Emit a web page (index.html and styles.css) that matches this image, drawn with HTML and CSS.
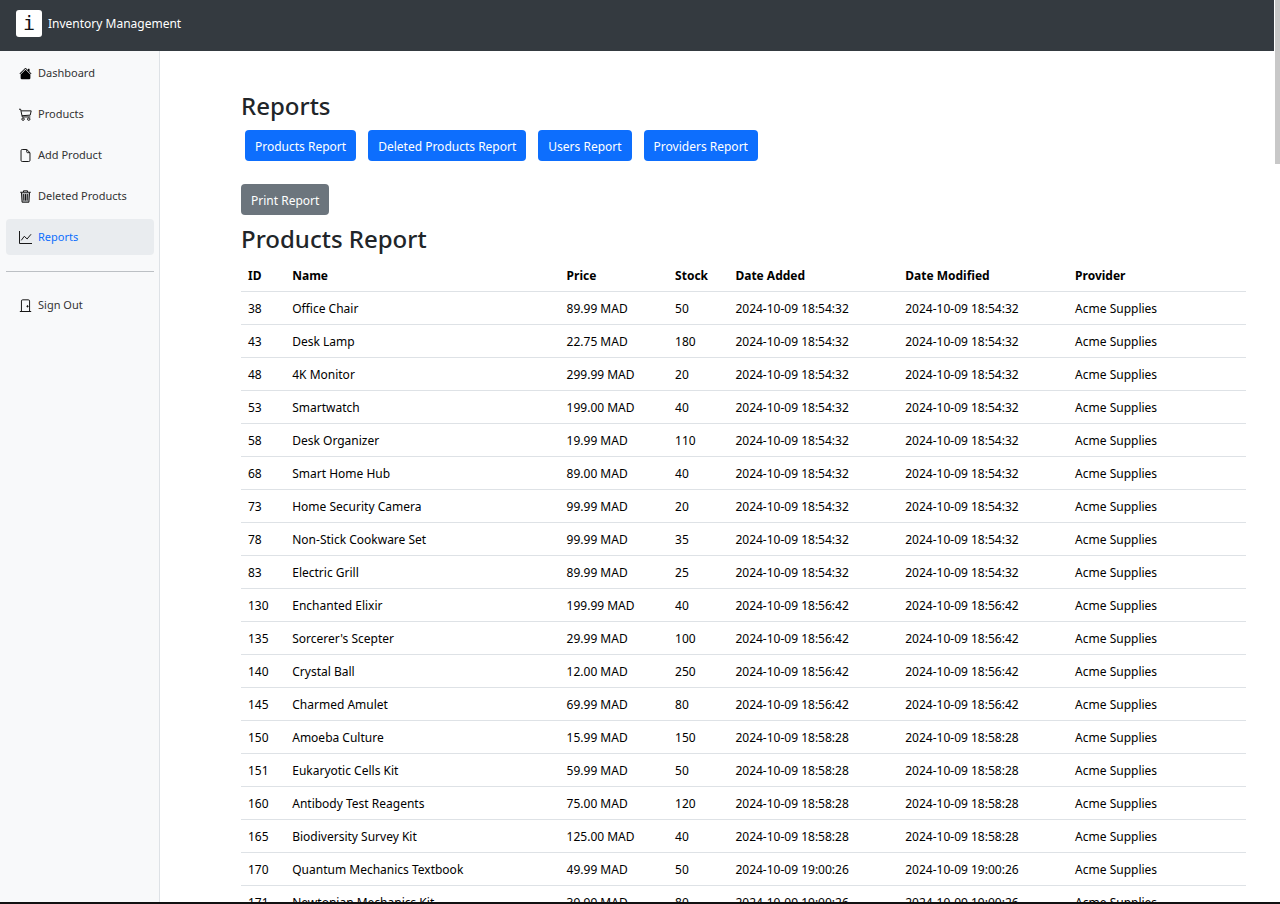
FILE: index.html
```html
<!DOCTYPE html>
<html lang="en">
<head>
<meta charset="utf-8">
<title>Inventory Management</title>
<link rel="stylesheet" href="styles.css">
</head>
<body>
<header class="topbar">
  <a class="brand" href="#"><span class="brand-mark">i</span><span>Inventory Management</span></a>
</header>
<div class="layout">
  <nav class="sidebar">
    <a class="nav-link" href="#">
      <svg class="icon solid" viewBox="0 0 16 16"><path d="M8.7 1.5a1 1 0 0 0-1.4 0L.6 8.1l.8.8L8 2.2l6.600 6.700.8-.8L13 5.800V2.500a.5.5 0 0 0-.5-.5h-1a.5.5 0 0 0-.5.5v1.300z"/><path d="m8 3.300 6 6v4.200a1.500 1.500 0 0 1-1.500 1.500h-9A1.500 1.500 0 0 1 2 13.500V9.300z"/></svg>
      <span>Dashboard</span></a>
    <a class="nav-link" href="#">
      <svg class="icon" viewBox="0 0 16 16"><path d="M0 1.500h2l2 9.500h10M2.600 3.500H15l-1.200 5.300L3.700 9.500"/><circle cx="5" cy="13.700" r="1.500"/><circle cx="12" cy="13.700" r="1.500"/></svg>
      <span>Products</span></a>
    <a class="nav-link" href="#">
      <svg class="icon" viewBox="0 0 16 16"><path d="M9.500.6H4A1.500 1.500 0 0 0 2.500 2v12A1.500 1.500 0 0 0 4 15.400h8a1.500 1.500 0 0 0 1.500-1.400V4.500zv2.900a1 1 0 0 0 1 1h3"/></svg>
      <span>Add Product</span></a>
    <a class="nav-link" href="#">
      <svg class="icon" viewBox="0 0 16 16"><path class="shade" d="M3 3.500l.8 11.500h8.400L13 3.500z"/><path d="M1.500 2.800h13M5.500 2.500V1h5v1.500M3 3l.8 12h8.400L13 3M5.700 5l.3 8M8 5v8M10.300 5l-.3 8"/></svg>
      <span>Deleted Products</span></a>
    <a class="nav-link active" href="#" aria-current="page">
      <svg class="icon" viewBox="0 0 16 16"><path d="M.6 0v15.400H16M2.800 11.500 6.500 6.500l3.500 3.300L14.800 4"/></svg>
      <span>Reports</span></a>
    <hr class="divider">
    <a class="nav-link" href="#">
      <svg class="icon" viewBox="0 0 16 16"><path d="M1 15.400h14M3 15V2.500A1.500 1.500 0 0 1 4.500 1h7A1.500 1.500 0 0 1 13 2.500V15"/><circle class="knob" cx="10.500" cy="9" r=".8"/></svg>
      <span>Sign Out</span></a>
  </nav>
  <main class="content">
    <h1 class="title">Reports</h1>
    <div class="report-tabs">
      <button class="btn" type="button">Products Report</button>
      <button class="btn" type="button">Deleted Products Report</button>
      <button class="btn" type="button">Users Report</button>
      <button class="btn" type="button">Providers Report</button>
    </div>
    <button class="btn print" type="button">Print Report</button>
    <h2 class="title">Products Report</h2>
    <table class="report">
      <colgroup><col class="c-id"><col class="c-name"><col class="c-price"><col class="c-stock"><col class="c-date"><col class="c-date"><col></colgroup>
      <thead><tr><th>ID</th><th>Name</th><th>Price</th><th>Stock</th><th>Date Added</th><th>Date Modified</th><th>Provider</th></tr></thead>
      <tbody>
        <tr><td>38</td><td>Office Chair</td><td>89.99 MAD</td><td>50</td><td>2024-10-09 18:54:32</td><td>2024-10-09 18:54:32</td><td>Acme Supplies</td></tr>
        <tr><td>43</td><td>Desk Lamp</td><td>22.75 MAD</td><td>180</td><td>2024-10-09 18:54:32</td><td>2024-10-09 18:54:32</td><td>Acme Supplies</td></tr>
        <tr><td>48</td><td>4K Monitor</td><td>299.99 MAD</td><td>20</td><td>2024-10-09 18:54:32</td><td>2024-10-09 18:54:32</td><td>Acme Supplies</td></tr>
        <tr><td>53</td><td>Smartwatch</td><td>199.00 MAD</td><td>40</td><td>2024-10-09 18:54:32</td><td>2024-10-09 18:54:32</td><td>Acme Supplies</td></tr>
        <tr><td>58</td><td>Desk Organizer</td><td>19.99 MAD</td><td>110</td><td>2024-10-09 18:54:32</td><td>2024-10-09 18:54:32</td><td>Acme Supplies</td></tr>
        <tr><td>68</td><td>Smart Home Hub</td><td>89.00 MAD</td><td>40</td><td>2024-10-09 18:54:32</td><td>2024-10-09 18:54:32</td><td>Acme Supplies</td></tr>
        <tr><td>73</td><td>Home Security Camera</td><td>99.99 MAD</td><td>20</td><td>2024-10-09 18:54:32</td><td>2024-10-09 18:54:32</td><td>Acme Supplies</td></tr>
        <tr><td>78</td><td>Non-Stick Cookware Set</td><td>99.99 MAD</td><td>35</td><td>2024-10-09 18:54:32</td><td>2024-10-09 18:54:32</td><td>Acme Supplies</td></tr>
        <tr><td>83</td><td>Electric Grill</td><td>89.99 MAD</td><td>25</td><td>2024-10-09 18:54:32</td><td>2024-10-09 18:54:32</td><td>Acme Supplies</td></tr>
        <tr><td>130</td><td>Enchanted Elixir</td><td>199.99 MAD</td><td>40</td><td>2024-10-09 18:56:42</td><td>2024-10-09 18:56:42</td><td>Acme Supplies</td></tr>
        <tr><td>135</td><td>Sorcerer's Scepter</td><td>29.99 MAD</td><td>100</td><td>2024-10-09 18:56:42</td><td>2024-10-09 18:56:42</td><td>Acme Supplies</td></tr>
        <tr><td>140</td><td>Crystal Ball</td><td>12.00 MAD</td><td>250</td><td>2024-10-09 18:56:42</td><td>2024-10-09 18:56:42</td><td>Acme Supplies</td></tr>
        <tr><td>145</td><td>Charmed Amulet</td><td>69.99 MAD</td><td>80</td><td>2024-10-09 18:56:42</td><td>2024-10-09 18:56:42</td><td>Acme Supplies</td></tr>
        <tr><td>150</td><td>Amoeba Culture</td><td>15.99 MAD</td><td>150</td><td>2024-10-09 18:58:28</td><td>2024-10-09 18:58:28</td><td>Acme Supplies</td></tr>
        <tr><td>151</td><td>Eukaryotic Cells Kit</td><td>59.99 MAD</td><td>50</td><td>2024-10-09 18:58:28</td><td>2024-10-09 18:58:28</td><td>Acme Supplies</td></tr>
        <tr><td>160</td><td>Antibody Test Reagents</td><td>75.00 MAD</td><td>120</td><td>2024-10-09 18:58:28</td><td>2024-10-09 18:58:28</td><td>Acme Supplies</td></tr>
        <tr><td>165</td><td>Biodiversity Survey Kit</td><td>125.00 MAD</td><td>40</td><td>2024-10-09 18:58:28</td><td>2024-10-09 18:58:28</td><td>Acme Supplies</td></tr>
        <tr><td>170</td><td>Quantum Mechanics Textbook</td><td>49.99 MAD</td><td>50</td><td>2024-10-09 19:00:26</td><td>2024-10-09 19:00:26</td><td>Acme Supplies</td></tr>
        <tr><td>171</td><td>Newtonian Mechanics Kit</td><td>39.99 MAD</td><td>80</td><td>2024-10-09 19:00:26</td><td>2024-10-09 19:00:26</td><td>Acme Supplies</td></tr>
      </tbody>
    </table>
  </main>
</div>
<div class="scrollbar"><div class="thumb"></div></div>
<footer class="bottom-edge"></footer>
</body>
</html>
```
FILE: styles.css
```css
* { box-sizing: border-box; }
body {
  margin: 0;
  height: 100vh;
  overflow: hidden;
  display: grid;
  grid-template: auto minmax(0, 1fr) 2px / minmax(0, 1fr) 6px;
  background: #fff;
  color: #212529;
  font: 12px/20px "Noto Sans", "Open Sans", sans-serif;
}
.topbar {
  display: flex;
  align-items: center;
  padding: 10px 16px 14px;
  background: #343a40;
}
.brand {
  display: flex;
  align-items: center;
  gap: 6px;
  color: #fff;
  text-decoration: none;
}
.brand-mark {
  width: 26px;
  border-radius: 3px;
  background: #fff;
  color: #111;
  font: 20px/27px "DejaVu Sans Mono", monospace;
  text-align: center;
}
.layout {
  grid-area: 2 / 1;
  display: flex;
  overflow: hidden;
}
.sidebar {
  flex: none;
  width: 160px;
  padding: 4px 5px 4px 6px;
  background: #f8f9fa;
  border-right: 1px solid #dee2e6;
  display: flex;
  flex-direction: column;
  gap: 5px;
}
.nav-link {
  display: flex;
  align-items: center;
  gap: 6px;
  padding: 8px 13px;
  border-radius: 4px;
  color: #333;
  font-size: 11px;
  white-space: nowrap;
  text-decoration: none;
}
.nav-link.active { background: #e9ecef; color: #0d6efd; }
.icon {
  flex: none;
  width: 13px;
  height: 13px;
  fill: none;
  stroke: #111;
  stroke-width: 1.2;
}
.icon.solid { fill: #000; stroke: none; }
.knob { fill: #111; }
.shade { fill: #b4b6b8; stroke: none; }
.divider {
  width: 100%;
  margin: 11px 0 10px;
  border: 0;
  border-top: 1px solid #bcc0c4;
}
.content {
  flex: 1;
  min-width: 0;
  padding: 39px 28px 0 81px;
}
.title { margin: 0; font-size: 24px; line-height: 31px; font-weight: 500; }
.report-tabs { display: flex; gap: 12px; margin: 9px 4px 23px; }
.btn {
  padding: 7px 10px 4px;
  border: 0;
  border-radius: 4px;
  background: #0d6efd;
  color: #fff;
  font: inherit;
}
.print { display: block; margin-bottom: 8px; background: #6c757d; }
.report {
  width: 100%;
  margin-top: 5px;
  table-layout: fixed;
  border-collapse: separate;
  border-spacing: 0;
  color: #000;
}
.c-id { width: 4.4%; }
.c-name { width: 27.3%; }
.c-price { width: 10.8%; }
.c-stock { width: 6%; }
.c-date { width: 16.9%; }
.report th, .report td {
  padding: 7px 7px 5px;
  border-bottom: 1px solid #dee2e6;
  text-align: left;
  white-space: nowrap;
}
.scrollbar { grid-area: 1 / 2 / 3 / 3; padding-left: 1px; }
.thumb { height: 164px; background: #c8c8c8; }
.bottom-edge { grid-area: 3 / 1 / 4 / 3; background: #111; }
```
